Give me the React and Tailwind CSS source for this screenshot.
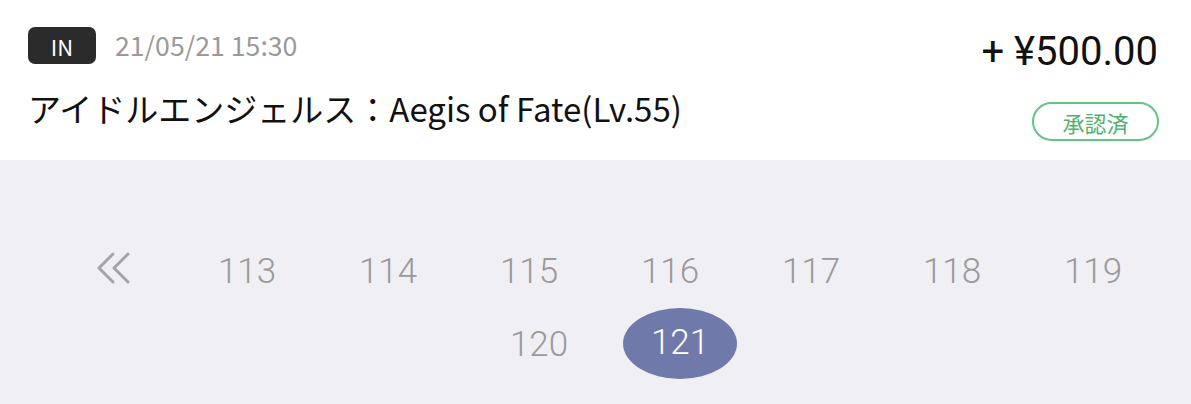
import React from "react";

const cjk = { fontFamily: '"Noto Sans CJK JP", "Noto Sans", sans-serif' };
const roboto = { fontFamily: 'Roboto, "Liberation Sans", sans-serif' };

function Chevrons() {
  return (
    <svg width="36" height="32" viewBox="0 0 36 32" fill="none" stroke="#a3a3a8" strokeWidth="3" strokeLinecap="round" strokeLinejoin="round">
      <polyline points="18,2 4,16 18,30" />
      <polyline points="33,2 19,16 33,30" />
    </svg>
  );
}

export default function App() {
  const pages = [113, 114, 115, 116, 117, 118, 119, 120, 121];
  return (
    <div className="w-[1191px] h-[404px] bg-[#f0eff4] overflow-hidden">
      <div className="bg-white h-[160px] pl-[28px] pr-[33px] flex justify-between">
        <div className="flex flex-col">
          <div className="flex items-center mt-[27px] gap-[19px]">
            <div className="w-[68px] h-[37px] rounded-[7px] bg-[#2b2b2b] text-white text-[22px] leading-none flex items-center justify-center" style={cjk}>IN</div>
            <div className="text-[26.7px] text-[#9a9a9a] leading-[37px] -mt-[2px]" style={cjk}>21/05/21 15:30</div>
          </div>
          <div className="text-[33px] text-[#111] mt-[24px] leading-[41px]" style={cjk}>アイドルエンジェルス：Aegis of Fate(Lv.55)</div>
        </div>
        <div className="flex flex-col items-end">
          <div className="text-[40px] text-[#111] mt-[28px] leading-[47px]" style={roboto}>+ ¥500.00</div>
          <div className="mt-[27px] -mr-[1px] w-[127px] h-[39px] rounded-full border-2 border-[#63c580] text-[#4fb26c] text-[22px] leading-none flex items-center justify-center" style={cjk}>承認済</div>
        </div>
      </div>
      <div className="pl-[28px] pt-[74px] flex flex-wrap justify-center">
        <div className="w-[121px] h-[73px] flex items-center justify-center -mt-[3px] pr-[6px]">
          <Chevrons />
        </div>
        {pages.map((p) => (
          <div key={p} className="w-[141px] h-[73px] flex items-center justify-center">
            {p === 121 ? (
              <div className="w-[114px] h-[71px] rounded-[50%] bg-[#6f7aab] text-white text-[35px] font-light flex items-center justify-center" style={roboto}>{p}</div>
            ) : (
              <div className="text-[35px] font-light text-[#9a9a9a] mt-[4px]" style={roboto}>{p}</div>
            )}
          </div>
        ))}
      </div>
    </div>
  );
}
